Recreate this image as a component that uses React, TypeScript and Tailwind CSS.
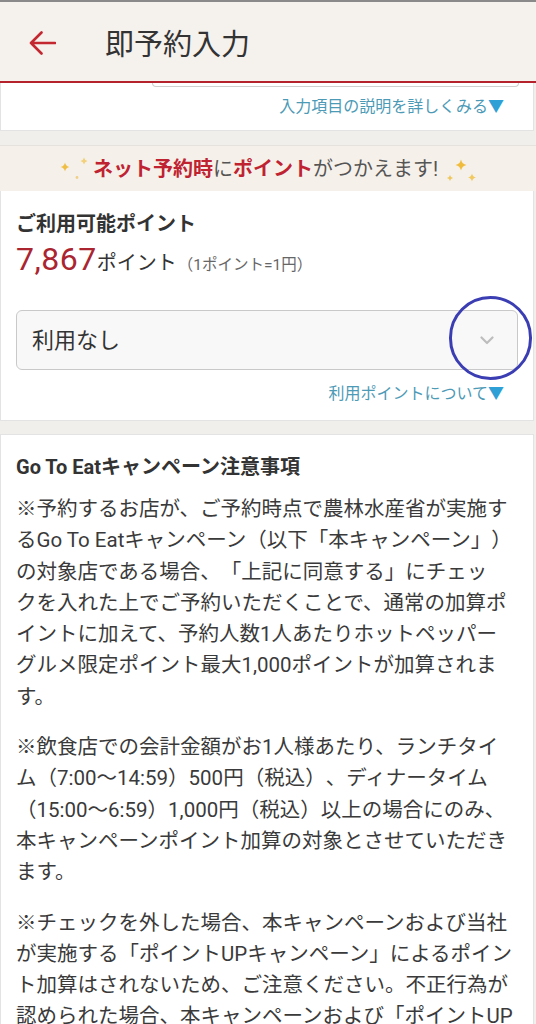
import React from "react";

const FONT = "Roboto, 'Noto Sans CJK JP', 'Noto Sans', sans-serif";

function star(cx: number, cy: number, r: number) {
  const k = r * 0.18;
  return `M${cx} ${cy - r} Q${cx + k} ${cy - k} ${cx + r} ${cy} Q${cx + k} ${cy + k} ${cx} ${cy + r} Q${cx - k} ${cy + k} ${cx - r} ${cy} Q${cx - k} ${cy - k} ${cx} ${cy - r}Z`;
}

function SparkLeft() {
  return (
    <svg width="30" height="26" viewBox="0 0 30 26" className="shrink-0">
      <path d={star(6, 11, 4.5)} fill="#efbf45" />
      <path d={star(25, 5, 3.5)} fill="#f3d07a" />
      <circle cx="18" cy="21.5" r="1.4" fill="#f0cf86" />
    </svg>
  );
}

function SparkRight() {
  return (
    <svg width="31" height="26" viewBox="0 0 31 26" className="shrink-0">
      <path d={star(4, 22, 3)} fill="#f0c75c" />
      <path d={star(15, 9, 5.5)} fill="#efbc3e" />
      <path d={star(26, 21.5, 4)} fill="#f2c95e" />
    </svg>
  );
}

const para1 = [
  "※予約するお店が、ご予約時点で農林水産省が実施す",
  "るGo To Eatキャンペーン（以下「本キャンペーン」）",
  "の対象店である場合、「上記に同意する」にチェッ",
  "クを入れた上でご予約いただくことで、通常の加算ポ",
  "イントに加えて、予約人数1人あたりホットペッパー",
  "グルメ限定ポイント最大1,000ポイントが加算されま",
  "す。",
];
const para2 = [
  "※飲食店での会計金額がお1人様あたり、ランチタイ",
  "ム（7:00〜14:59）500円（税込）、ディナータイム",
  "（15:00〜6:59）1,000円（税込）以上の場合にのみ、",
  "本キャンペーンポイント加算の対象とさせていただき",
  "ます。",
];
const para3 = [
  "※チェックを外した場合、本キャンペーンおよび当社",
  "が実施する「ポイントUPキャンペーン」によるポイン",
  "ト加算はされないため、ご注意ください。不正行為が",
  "認められた場合、本キャンペーンおよび「ポイントUP",
];

function Para({ lines, first }: { lines: string[]; first?: boolean }) {
  return (
    <div className={first ? "" : "mt-[19px]"}>
      {lines.map((l, i) => (
        <div key={i} className="whitespace-nowrap leading-[31.3px] h-[31.3px]">
          {l}
        </div>
      ))}
    </div>
  );
}

export default function App() {
  return (
    <div
      className="w-[536px] h-[1024px] overflow-hidden bg-[#f1efec] text-[#333] [text-spacing-trim:space-all]"
      style={{ fontFamily: FONT }}
    >
      {/* top line */}
      <div className="h-[2px] bg-[#8a8a8a]" />
      {/* header */}
      <div className="h-[81px] bg-[#f5f1ed] border-b-[2px] border-[#b5222c] flex items-center pt-[6px]">
        <div className="w-[105px] flex items-center pl-[29px] mt-[-4px]">
          <svg width="27" height="24" viewBox="0 0 27 24">
            <path
              d="M2 12H26M12.5 1.5L2 12L12.5 22.5"
              fill="none"
              stroke="#c3272f"
              strokeWidth="2.6"
              strokeLinecap="round"
              strokeLinejoin="round"
            />
          </svg>
        </div>
        <div className="text-[29px] leading-[36px] text-[#333]">即予約入力</div>
      </div>

      {/* card 1 */}
      <div className="bg-white border-l border-[#e3e3e3] border-r mr-[2px] border-b">
        <div className="ml-[151px] w-[367px] h-[4px] border border-t-0 border-[#cfcfcf] rounded-b-[6px]" />
        <div className="mt-[9px] pb-[12px] pr-[29px] flex justify-end text-[16px] leading-[22px] text-[#4c9ab6]">
          入力項目の説明を詳しくみる<span className="text-[#2ea0d6]">▼</span>
        </div>
      </div>

      {/* gap */}
      <div className="h-[14px]" />

      {/* banner */}
      <div className="h-[46px] bg-[#f5f1ea] border-t border-[#e5e1dc] flex items-center justify-center">
        <SparkLeft />
        <div className="ml-[4px] mr-[8px] text-[20px] leading-[28px] text-[#555] whitespace-nowrap">
          <span className="font-bold text-[#bf2231]">ネット予約時</span>に
          <span className="font-bold text-[#bf2231]">ポイント</span>がつかえます!
        </div>
        <SparkRight />
      </div>

      {/* card 2 */}
      <div className="bg-white border-x border-b border-[#e3e3e3] mr-[2px] pt-[19px] px-[15px] pb-[15px]">
        <div className="text-[20px] leading-[28px] font-bold text-[#333]">ご利用可能ポイント</div>
        <div className="flex items-baseline h-[40px] leading-[40px] mt-[1px]">
          <span className="text-[32px] tracking-[0.5px] text-[#aa2530]">7,867</span>
          <span className="text-[20px] text-[#333]">ポイント</span>
          <span className="text-[15.5px] text-[#666] ml-[1px]">（1ポイント=1円）</span>
        </div>
        <div className="relative mt-[31px] h-[60px] rounded-[6px] border border-[#c9c9c9] bg-[#f8f8f8] flex items-center justify-between pl-[15px] pr-[23px]">
          <span className="text-[22px] text-[#333]">利用なし</span>
          <svg width="14" height="9" viewBox="0 0 14 9">
            <path d="M1.5 1.5L7 7L12.5 1.5" fill="none" stroke="#bdbdbd" strokeWidth="2.2" strokeLinecap="round" strokeLinejoin="round" />
          </svg>
          <div className="absolute left-[432px] top-[-15px] w-[83px] h-[84px] rounded-full border-[3px] border-[#3b3db3]" />
        </div>
        <div className="mt-[13px] pr-[14px] flex justify-end text-[16px] leading-[22px] text-[#4c9ab6]">
          利用ポイントについて<span className="text-[#2ea0d6]">▼</span>
        </div>
      </div>

      {/* gap */}
      <div className="h-[13px]" />

      {/* card 3 */}
      <div className="bg-white border-x border-t border-[#e3e3e3] mr-[2px] pt-[18px] px-[15px]">
        <div className="text-[20px] leading-[28px] font-bold text-[#333]">Go To Eatキャンペーン注意事項</div>
        <div className="mt-[13px] text-[20.5px] text-[#3a3a3a]">
          <Para lines={para1} first />
          <Para lines={para2} />
          <Para lines={para3} />
        </div>
      </div>
    </div>
  );
}
